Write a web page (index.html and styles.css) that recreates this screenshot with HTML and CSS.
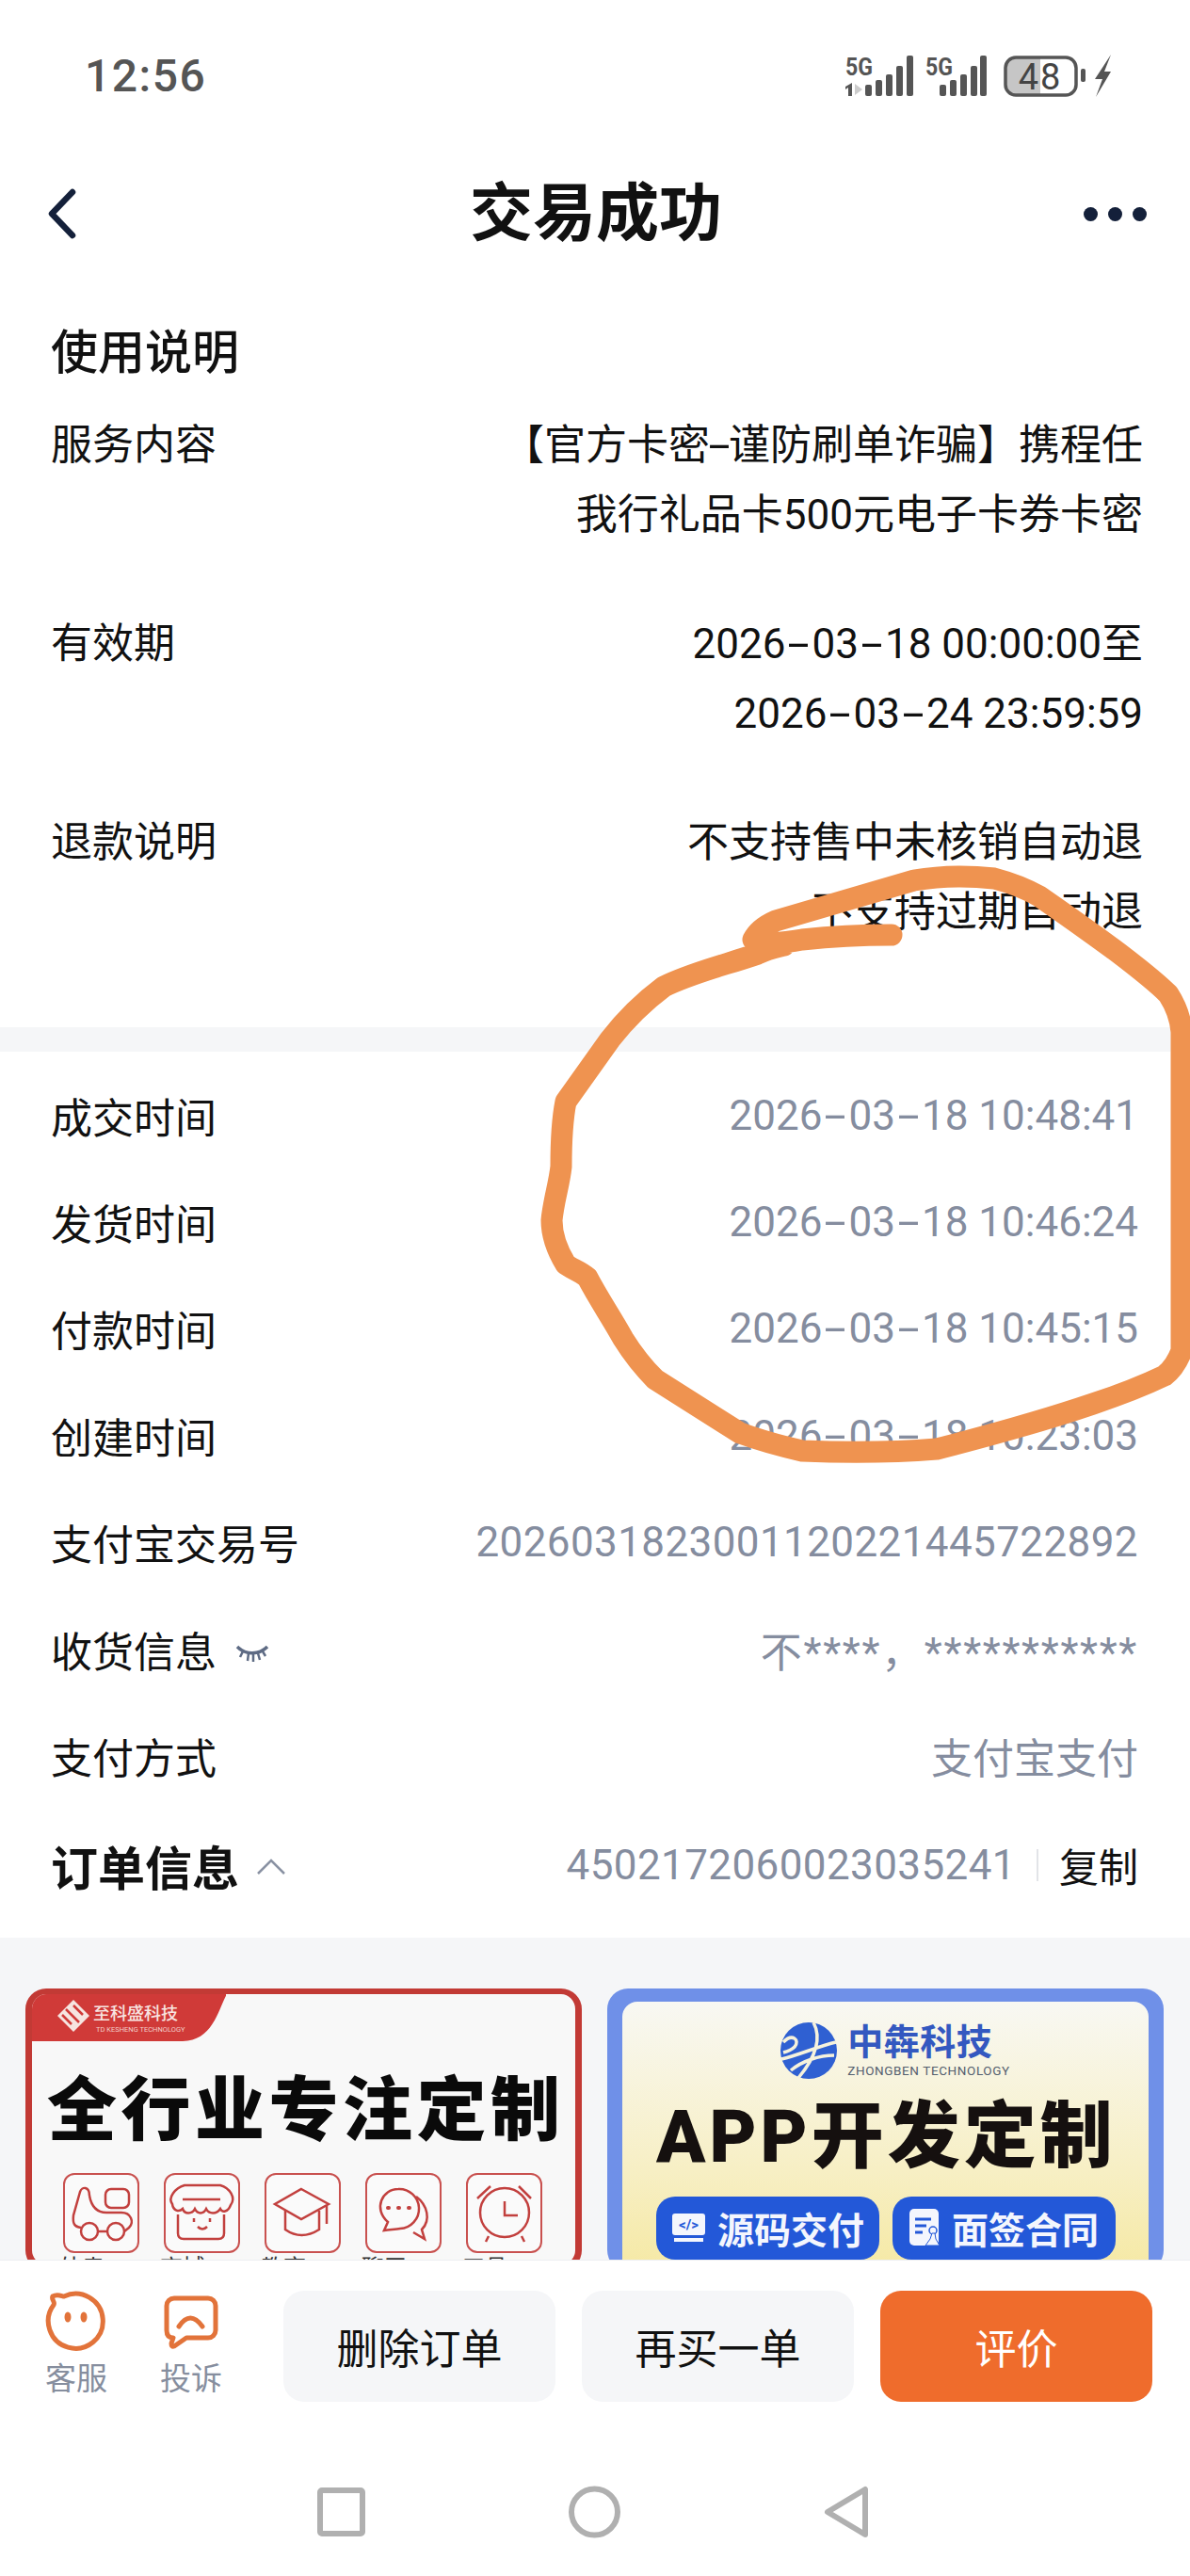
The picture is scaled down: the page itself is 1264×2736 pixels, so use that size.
FILE: index.html
```html
<!DOCTYPE html>
<html lang="zh-CN">
<head>
  <meta charset="UTF-8" />
  <meta name="viewport" content="width=device-width, initial-scale=1.0"/>
  <title>交易成功</title>
  <link rel="stylesheet" href="styles.css">
</head>
<body>

<div class="page">
  <div class="status">
    <span class="time">12:56</span>
    <svg class="status-icons" width="320" height="80" viewBox="0 0 320 80">
      <g fill="#555">
        <text x="18" y="40" class="net" textLength="29" lengthAdjust="spacingAndGlyphs">5G</text>
        <path d="M25 48v14h-4v-9l-3 2v-3z"/>
        <path d="M28 49l8 6-8 6z" fill="#ccc"/>
        <rect x="39" y="50" width="7" height="12" rx="2"/>
        <rect x="50" y="45" width="7" height="17" rx="2"/>
        <rect x="61" y="39" width="7" height="23" rx="2"/>
        <rect x="72" y="30" width="7" height="32" rx="2"/>
        <rect x="83" y="19" width="7" height="43" rx="2"/>
        <text x="103" y="40" class="net" textLength="29" lengthAdjust="spacingAndGlyphs">5G</text>
        <rect x="118" y="50" width="7" height="12" rx="2"/>
        <rect x="129" y="45" width="7" height="17" rx="2"/>
        <rect x="140" y="39" width="7" height="23" rx="2"/>
        <rect x="151" y="30" width="7" height="32" rx="2"/>
        <rect x="161" y="19" width="7" height="43" rx="2"/>
      </g>
      <path d="M198 21h27v40h-27a10 10 0 0 1-10-10V31a10 10 0 0 1 10-10z" fill="#c6c6c6"/>
      <rect x="188" y="21" width="75" height="40" rx="11" fill="none" stroke="#555" stroke-width="3.5"/>
      <text x="225" y="55" class="batt" text-anchor="middle">48</text>
      <rect x="268" y="33" width="5" height="14" rx="2" fill="#555"/>
      <path d="M300 18L283 44h8l-7 19 16-27h-7l7-18z" fill="#555"/>
    </svg>
  </div>

  <div class="nav">
    <svg class="back" width="34" height="54" viewBox="0 0 34 54">
      <path d="M29 4L7 27l22 23" fill="none" stroke="#14203a" stroke-width="6.5" stroke-linecap="round" stroke-linejoin="round"/>
    </svg>
    <h1>交易成功</h1>
    <div class="dots"><i></i><i></i><i></i></div>
  </div>

  <div class="usage">
    <h2>使用说明</h2>
    <div class="usage-row">
      <span>服务内容</span>
      <span class="usage-val">【官方卡密<i class="dash dash-cjk">-</i>谨防刷单诈骗】携程任<br>我行礼品卡500元电子卡券卡密</span>
    </div>
    <div class="usage-row">
      <span>有效期</span>
      <span class="usage-val">2026<i class="dash">-</i>03<i class="dash">-</i>18 00:00:00至<br>2026<i class="dash">-</i>03<i class="dash">-</i>24 23:59:59</span>
    </div>
    <div class="usage-row">
      <span>退款说明</span>
      <span class="usage-val">不支持售中未核销自动退<br>不支持过期自动退</span>
    </div>
  </div>

  <div class="info">
    <div class="info-row"><span>成交时间</span><span class="val">2026<i class="dash">-</i>03<i class="dash">-</i>18 10:48:41</span></div>
    <div class="info-row"><span>发货时间</span><span class="val">2026<i class="dash">-</i>03<i class="dash">-</i>18 10:46:24</span></div>
    <div class="info-row"><span>付款时间</span><span class="val">2026<i class="dash">-</i>03<i class="dash">-</i>18 10:45:15</span></div>
    <div class="info-row"><span>创建时间</span><span class="val">2026<i class="dash">-</i>03<i class="dash">-</i>18 10:23:03</span></div>
    <div class="info-row"><span>支付宝交易号</span><span class="val trade">2026031823001120221445722892</span></div>
    <div class="info-row">
      <span class="with-icon">收货信息
        <svg width="36" height="20" viewBox="0 0 36 20">
          <path d="M2 3c9 9 23 9 32 0" fill="none" stroke="#5e6b84" stroke-width="3.5"/>
          <path d="M8 8l-3 6M14 10l-1 8M19 11v8M24 10l2 7M29 8l3 5" fill="none" stroke="#5e6b84" stroke-width="2.5"/>
        </svg>
      </span>
      <span class="val mask">不****，***********</span>
    </div>
    <div class="info-row"><span>支付方式</span><span class="val">支付宝支付</span></div>
    <div class="order-row">
      <span class="order-title">订单信息
        <svg width="32" height="18" viewBox="0 0 32 18">
          <path d="M2 16L16 2l14 14" fill="none" stroke="#8a92a3" stroke-width="2.5"/>
        </svg>
      </span>
      <span class="order-right">
        <span class="val trade">4502172060023035241</span>
        <i class="divider"></i>
        <span>复制</span>
      </span>
    </div>
  </div>

  <div class="ads">
    <div class="ad ad-red">
      <svg class="ad-tab" width="206" height="50" viewBox="0 0 206 50">
        <path d="M0 0H207C198 16 192 50 160 50H0z" fill="#d03a38"/>
        <path d="M44 6l17 17-17 17-17-17z" fill="#f6e4e0"/>
        <path d="M36 16l14 14M32 22l10 10M44 12l10 10" stroke="#d03a38" stroke-width="2.5" fill="none"/>
        <text x="65" y="27" class="tab-name">至科盛科技</text>
        <text x="68" y="40" class="tab-sub">TD KESHENG TECHNOLOGY</text>
      </svg>
      <div class="ad-red-title">全行业专注定制</div>
      <div class="ad-icons">
        <div class="ad-icon">
          <div class="ad-box">
            <svg width="76" height="80" viewBox="2 2 76 80">
              <circle cx="28" cy="62" r="9"/><circle cx="56" cy="62" r="9"/><path d="M37 62h10"/>
              <rect x="45" y="17" width="25" height="20" rx="6"/>
              <path d="M28 24C28 14 20 14 18 20L11 45C10 54 12 57 19 58"/>
              <path d="M28 24C30 35 36 42 46 42H62C72 42 76 52 70 58L65 62"/>
            </svg>
          </div>
          <span>外卖APP</span>
        </div>
        <div class="ad-icon">
          <div class="ad-box">
            <svg width="76" height="80" viewBox="2 2 76 80">
              <path d="M22 13H60C70 16 77 26 71 34C68 42 62 42 60 38C56 44 48 44 45 38C42 44 36 44 33 38C30 44 22 44 20 38C16 42 10 40 9 33C4 26 12 16 22 13z"/>
              <path d="M20 28H60"/>
              <path d="M15 44V64Q15 70 21 70H58Q64 70 64 64V44"/>
              <path d="M32 48v4M49 48v4M36 57q5 5 10 0"/>
            </svg>
          </div>
          <span>商城APP</span>
        </div>
        <div class="ad-icon">
          <div class="ad-box">
            <svg width="76" height="80" viewBox="2 2 76 80">
              <path d="M39 17L68 33 39 49 11 33z"/>
              <path d="M22 40V60Q39 72 58 60V40"/>
              <path d="M66 35V54"/>
            </svg>
          </div>
          <span>教育APP</span>
        </div>
        <div class="ad-icon">
          <div class="ad-box">
            <svg width="76" height="80" viewBox="2 2 76 80">
              <path d="M35 17A21 21 0 1 1 37 59C32 60 26 60 20 61L24 52C8 38 18 17 35 17z"/>
              <path d="M54 25C66 34 70 50 60 60L63 70 51 63"/>
              <path d="M24 37h1M35 37h1M46 37h1" stroke-width="4" stroke-linecap="round"/>
            </svg>
          </div>
          <span>聊天APP</span>
        </div>
        <div class="ad-icon">
          <div class="ad-box">
            <svg width="76" height="80" viewBox="2 2 76 80">
              <circle cx="41" cy="42" r="26"/>
              <path d="M41 30V45H55M12 27L26 14M56 14L69 27M21 73L24 67M62 73L59 67"/>
            </svg>
          </div>
          <span>工具APP</span>
        </div>
      </div>
    </div>

    <div class="ad ad-blue">
      <div class="ad-blue-inner">
        <div class="zb-logo">
          <svg width="62" height="62" viewBox="0 0 62 62">
            <circle cx="31" cy="31" r="30" fill="#2f60d2"/>
            <path d="M36 1C44 16 40 36 20 60M4 22C14 12 22 20 16 27 12 31 8 32 4 33M2 40C20 36 42 26 60 22M12 52C24 42 42 36 58 36" fill="none" stroke="#f6f2dc" stroke-width="3.5"/>
          </svg>
          <div>
            <div class="zb-name">中犇科技</div>
            <div class="zb-sub">ZHONGBEN TECHNOLOGY</div>
          </div>
        </div>
        <div class="ad-blue-title">APP开发定制</div>
        <div class="pills">
          <div class="pill">
            <svg width="38" height="34" viewBox="0 0 38 34">
              <rect x="1" y="2" width="35" height="23" rx="3" fill="#f4f6fd"/>
              <path d="M3 30h31" stroke="#f4f6fd" stroke-width="4"/>
              <text x="18.5" y="19" class="code" text-anchor="middle">&lt;/&gt;</text>
            </svg>
            <span>源码交付</span>
          </div>
          <div class="pill">
            <svg width="34" height="40" viewBox="0 0 34 40">
              <rect x="0" y="0" width="31" height="39" rx="5" fill="#f4f6fd"/>
              <path d="M6 11h17M6 18h12M6 25h8" stroke="#2358d8" stroke-width="3"/>
              <circle cx="25" cy="23" r="4" fill="#f4f6fd" stroke="#2358d8" stroke-width="1.5"/>
              <path d="M24 26h3l1 6 4 7H17l5-7z" fill="#f4f6fd" stroke="#2358d8" stroke-width="1"/>
            </svg>
            <span>面签合同</span>
          </div>
        </div>
      </div>
    </div>
  </div>

  <div class="bottom">
    <div class="actions">
      <div class="tool tool-first">
        <svg width="66" height="66" viewBox="0 0 66 66">
          <path d="M8 6C13 3 18 6 20 6A29 29 0 1 1 9 15C11 12 6 9 8 6z" fill="none" stroke="#e2733a" stroke-width="5" stroke-linejoin="round"/>
          <ellipse cx="24" cy="28" rx="3.5" ry="5.5" fill="#e2733a"/>
          <ellipse cx="41" cy="28" rx="3.5" ry="5.5" fill="#e2733a"/>
        </svg>
        <span>客服</span>
      </div>
      <div class="tool">
        <svg width="66" height="66" viewBox="0 0 66 66">
          <path d="M15 8H51a8 8 0 0 1 8 8V42a8 8 0 0 1-8 8H28L15 59Q12 60 12 56L14 50Q7 50 7 42V16a8 8 0 0 1 8-8z" fill="none" stroke="#e2733a" stroke-width="5" stroke-linejoin="round"/>
          <path d="M20 38Q32 20 45 38" fill="none" stroke="#e2733a" stroke-width="5" stroke-linecap="round"/>
        </svg>
        <span>投诉</span>
      </div>
      <div class="buttons">
        <button type="button">删除订单</button>
        <button type="button">再买一单</button>
        <button type="button" class="primary">评价</button>
      </div>
    </div>
    <div class="sysnav">
      <svg width="51" height="56" viewBox="0 0 51 56"><rect x="3" y="5" width="45" height="46" rx="2" fill="none" stroke="#b0b0b0" stroke-width="6"/></svg>
      <svg width="55" height="56" viewBox="0 0 55 56"><circle cx="27.5" cy="28" r="24.5" fill="none" stroke="#b0b0b0" stroke-width="6"/></svg>
      <svg width="48" height="56" viewBox="0 0 48 56"><path d="M44 4V52L4 28z" fill="none" stroke="#b0b0b0" stroke-width="6" stroke-linejoin="round"/></svg>
    </div>
  </div>

  <!-- hand-drawn circle someone put over the screenshot -->
  <svg class="scribble" width="1264" height="2736" viewBox="0 0 1264 2736">
    <path d="M947 993C910 993 880 995 852 998 835 1001 815 1004 800 998 805 988 815 982 824 978L971 935C1000 930 1030 930 1056 933 1075 938 1090 944 1104 952 1130 970 1158 990 1184 1009 1205 1025 1225 1040 1241 1056 1250 1070 1254 1082 1255 1096V1435C1250 1448 1245 1455 1237 1461 1212 1473 1188 1482 1161 1491 1105 1510 1050 1525 995 1539 945 1543 900 1543 852 1541 830 1536 808 1530 786 1522L696 1465C683 1452 672 1438 662 1422 650 1400 636 1380 624 1357 616 1350 608 1348 601 1343 590 1325 586 1310 586 1296 588 1275 594 1258 596 1239 596 1215 597 1190 601 1170L648 1104C665 1082 685 1063 705 1048 735 1033 770 1025 805 1013 815 1008 825 1006 833 1004" fill="none" stroke="#ef9350" stroke-width="23" stroke-linecap="round" stroke-linejoin="round"/>
  </svg>
</div>

</body>
</html>
```

FILE: styles.css
```css
* {
  box-sizing: border-box;
}
body {
  margin: 0;
  font-family: Roboto, "Noto Sans CJK SC", sans-serif;
  color: #111;
  background: #fff;
}
.page {
  position: relative;
  width: 1264px;
  height: 2736px;
  overflow: hidden;
}
.dash {
  display: inline-block;
  width: 28px;
  text-align: center;
  font-style: normal;
  transform: scaleX(1.9);
}
.dash-cjk {
  width: 20px;
}

/* status bar */
.status {
  height: 160px;
  padding: 0 64px 0 90px;
  display: flex;
  align-items: center;
  justify-content: space-between;
}
.time {
  font-size: 48px;
  letter-spacing: 1.5px;
  color: #555;
  font-weight: 500;
}
.net {
  font-family: Roboto, sans-serif;
  font-size: 26px;
  font-weight: 700;
}
.batt {
  font-family: Roboto, sans-serif;
  font-size: 38px;
  letter-spacing: 2px;
  fill: #444;
}

/* nav */
.nav {
  height: 134px;
  padding: 0 46px 0 48px;
  display: grid;
  grid-template-columns: 1fr auto 1fr;
  align-items: center;
}
.nav h1 {
  margin: 0;
  font-size: 67px;
  font-weight: 700;
  line-height: 1;
}
.dots {
  display: flex;
  justify-content: flex-end;
  gap: 11px;
}
.dots i {
  width: 15px;
  height: 15px;
  border-radius: 50%;
  background: #14203a;
}

/* usage section */
.usage {
  padding: 44px 50px 85px 54px;
  font-size: 44px;
  line-height: 73.5px;
}
.usage h2 {
  margin: 0 0 25px;
  font-size: 50px;
  font-weight: 500;
  line-height: 74px;
}
.usage-row {
  display: flex;
  justify-content: space-between;
  margin-bottom: 64px;
}
.usage-row:last-child {
  margin-bottom: 0;
}
.usage-val {
  text-align: right;
}

/* info section */
.info {
  border-top: 26px solid #f5f6f8;
  padding: 11px 55px 18px 54px;
  font-size: 44px;
}
.info-row {
  height: 113.4px;
  display: flex;
  align-items: center;
  justify-content: space-between;
}
.val {
  color: #858d9f;
}
.trade {
  letter-spacing: 0.4px;
}
.mask {
  letter-spacing: 1.7px;
}
.with-icon {
  display: flex;
  align-items: center;
  gap: 20px;
}
.with-icon svg {
  margin-top: 8px;
}
.order-row {
  height: 118px;
  display: flex;
  align-items: center;
  justify-content: space-between;
}
.order-title {
  display: flex;
  align-items: center;
  gap: 18px;
  font-size: 50px;
  font-weight: 700;
}
.order-title svg {
  margin-top: 4px;
}
.order-right {
  display: flex;
  align-items: center;
  font-size: 42px;
}
.order-right .val {
  font-size: 44px;
}
.divider {
  width: 2px;
  height: 34px;
  margin: 0 22px;
  background: #e2e4e8;
}

/* ads */
.ads {
  height: 342px;
  padding: 54px 28px 0 27px;
  display: flex;
  gap: 27px;
  background: #f5f6f8;
  overflow: hidden;
}
.ad {
  width: 591px;
  height: 300px;
  flex: none;
  border-radius: 22px;
  overflow: hidden;
}
.ad-red {
  background: #f8f8f8;
  border: 7px solid #c23a35;
  border-top-width: 6px;
}
.ad-tab {
  display: block;
}
.tab-name {
  font-size: 18px;
  font-weight: 500;
  fill: #f8e4e0;
}
.tab-sub {
  font-size: 7.5px;
  fill: #f3cfca;
}
.ad-red-title {
  margin-top: 34px;
  padding-left: 16px;
  font-size: 74px;
  font-weight: 900;
  line-height: 80px;
  letter-spacing: 4.5px;
  color: #0a0a0a;
  white-space: nowrap;
}
.ad-icons {
  display: flex;
  gap: 26px;
  margin-top: 26px;
  padding-left: 33px;
}
.ad-icon {
  width: 81px;
  text-align: center;
  font-size: 24px;
  line-height: 30px;
  color: #333;
  white-space: nowrap;
}
.ad-box {
  height: 85px;
  border: 2.5px solid #c9514f;
  border-radius: 12px;
  background: #fafafa;
}
.ad-box svg {
  display: block;
  fill: none;
  stroke: #c2403e;
  stroke-width: 2.5;
}
.ad-icon span {
  display: block;
  margin-top: 1px;
  margin-left: -4px;
  width: 90px;
}
.ad-blue {
  background: #6f90e8;
  padding: 14px 16px 0;
}
.ad-blue-inner {
  height: 300px;
  border-radius: 16px 16px 0 0;
  background: linear-gradient(#f8f8f3, #f7efc4 60%, #f5e8a0);
  padding-top: 21px;
}
.zb-logo {
  display: flex;
  justify-content: center;
  gap: 10px;
  align-items: center;
  padding-left: 20px;
}
.zb-name {
  font-size: 38px;
  font-weight: 700;
  line-height: 42px;
  letter-spacing: 0.5px;
  color: #3358c0;
}
.zb-sub {
  font-size: 13.5px;
  line-height: 18px;
  color: #55606f;
  letter-spacing: 0.6px;
  white-space: nowrap;
}
.ad-blue-title {
  margin-top: 16px;
  padding-left: 36px;
  font-size: 77px;
  font-weight: 900;
  line-height: 90px;
  letter-spacing: 4px;
  color: #15100f;
  white-space: nowrap;
}
.pills {
  display: flex;
  gap: 14px;
  margin-top: 18px;
  padding-left: 36px;
}
.pill {
  width: 237px;
  height: 67px;
  flex: none;
  display: flex;
  align-items: center;
  justify-content: center;
  gap: 11px;
  border-radius: 20px;
  background: #2358d8;
  color: #f4f6fd;
  font-size: 39px;
  font-weight: 700;
  white-space: nowrap;
}
.code {
  font-size: 15px;
  font-weight: 700;
  fill: #2358d8;
}

/* bottom bar */
.bottom {
  position: relative;
  height: 336px;
  background: #fff;
  border-top: 1px solid #eceef1;
}
.actions {
  display: flex;
  margin-top: 32px;
  padding: 0 41px 0 48px;
}
.tool {
  width: 66px;
  margin-right: 65px;
  display: flex;
  flex-direction: column;
  align-items: center;
  font-size: 33px;
  line-height: 44px;
  color: #868e9e;
  white-space: nowrap;
}
.tool-first {
  margin-right: 56px;
}
.tool svg {
  display: block;
  margin-bottom: 6px;
}
.buttons {
  display: flex;
  gap: 28px;
}
button {
  width: 289px;
  height: 118px;
  padding: 0;
  border: none;
  border-radius: 22px;
  background: #f5f6f8;
  color: #111;
  font-family: inherit;
  font-size: 44px;
}
button.primary {
  background: #ef6c2c;
  color: #fff;
}
.sysnav {
  display: flex;
  gap: 216px;
  margin-top: 89px;
  padding-left: 337px;
}

.scribble {
  position: absolute;
  top: 0;
  left: 0;
  pointer-events: none;
}
```
